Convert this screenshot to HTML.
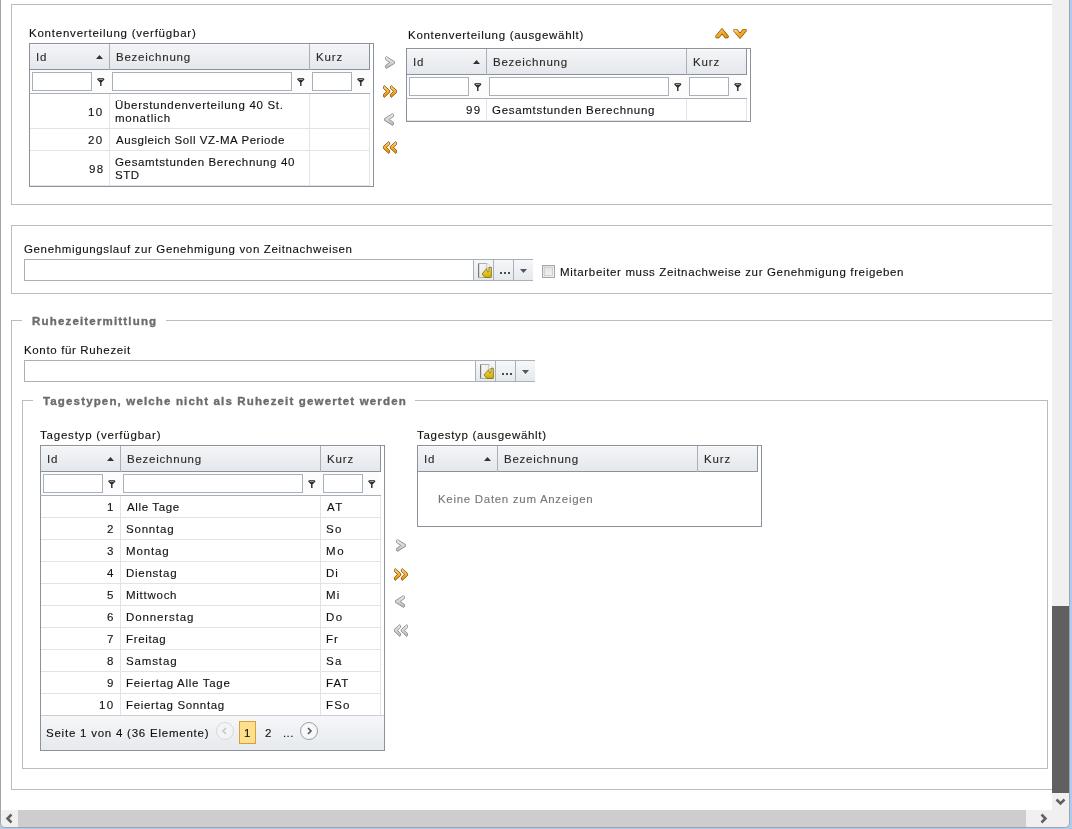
<!DOCTYPE html><html><head><meta charset="utf-8"><style>
html,body{margin:0;padding:0}body{width:1072px;height:829px;overflow:hidden;position:relative;background:#fff}
.a{position:absolute}
.t{position:absolute;font-family:"Liberation Sans", sans-serif;font-size:11.5px;line-height:13px;color:#111;-webkit-text-stroke-width:0.12px;white-space:nowrap;will-change:transform}
.lg{font-weight:bold;color:#6b6b6b;letter-spacing:0.8px}
</style></head><body>
<div class="a" style="left:11px;top:4px;width:1100px;height:201px;box-sizing:border-box;border:1px solid #b9bcc1"></div>
<div class="t" style="left:29.00px;top:27px;letter-spacing:0.778px;">Kontenverteilung (verfügbar)</div>
<div class="a" style="left:29px;top:43px;width:345px;height:144px;box-sizing:border-box;border:1px solid #8b929b;background:#fff"></div>
<div class="a" style="left:30px;top:44px;width:339px;height:25px;background:linear-gradient(#f4f5f7,#e4e8ec)"></div>
<div class="a" style="left:30px;top:44px;width:339px;height:1px;background:#fbfbfc"></div>
<div class="a" style="left:29px;top:69px;width:341px;height:1px;background:#8b929b"></div>
<div class="a" style="left:369px;top:43px;width:1px;height:27px;background:#8b929b"></div>
<div class="a" style="left:109px;top:44px;width:1px;height:26px;background:#a9b0b8"></div>
<div class="a" style="left:309px;top:44px;width:1px;height:26px;background:#a9b0b8"></div>
<div class="t" style="left:36.00px;top:51px;letter-spacing:0.838px;color:#2a2a2a">Id</div>
<svg class="a" style="left:96px;top:55px" width="7" height="4" viewBox="0 0 7 4"><path d="M0 4 L3.5 0 L7 4 Z" fill="#333"/></svg>
<div class="t" style="left:116.00px;top:51px;letter-spacing:0.766px;color:#2a2a2a">Bezeichnung</div>
<div class="t" style="left:316.00px;top:51px;letter-spacing:0.838px;color:#2a2a2a">Kurz</div>
<div class="a" style="left:30px;top:70px;width:339px;height:23px;background:#fcfcfd"></div>
<div class="a" style="left:32px;top:72px;width:60px;height:19px;box-sizing:border-box;border:1px solid #a9b0b9;background:#fff"></div>
<svg class="a" style="left:97px;top:78px" width="8" height="8" viewBox="0 0 8 8"><path d="M0.2 1.4 Q0.2 0.1 3.8 0.1 Q7.4 0.1 7.4 1.4 L4.5 4.4 V7.9 H3.1 V4.4 Z" fill="#2b2b2b"/><ellipse cx="3.8" cy="1.3" rx="2.3" ry="0.55" fill="#c8c8c8"/></svg>
<div class="a" style="left:112px;top:72px;width:180px;height:19px;box-sizing:border-box;border:1px solid #a9b0b9;background:#fff"></div>
<svg class="a" style="left:297px;top:78px" width="8" height="8" viewBox="0 0 8 8"><path d="M0.2 1.4 Q0.2 0.1 3.8 0.1 Q7.4 0.1 7.4 1.4 L4.5 4.4 V7.9 H3.1 V4.4 Z" fill="#2b2b2b"/><ellipse cx="3.8" cy="1.3" rx="2.3" ry="0.55" fill="#c8c8c8"/></svg>
<div class="a" style="left:312px;top:72px;width:40px;height:19px;box-sizing:border-box;border:1px solid #a9b0b9;background:#fff"></div>
<svg class="a" style="left:357px;top:78px" width="8" height="8" viewBox="0 0 8 8"><path d="M0.2 1.4 Q0.2 0.1 3.8 0.1 Q7.4 0.1 7.4 1.4 L4.5 4.4 V7.9 H3.1 V4.4 Z" fill="#2b2b2b"/><ellipse cx="3.8" cy="1.3" rx="2.3" ry="0.55" fill="#c8c8c8"/></svg>
<div class="a" style="left:29px;top:93px;width:341px;height:1px;background:#a8afb8"></div>
<div class="a" style="left:30px;top:128px;width:340px;height:1px;background:#e0e3e7"></div>
<div class="a" style="left:109px;top:94px;width:1px;height:35px;background:#e0e3e7"></div>
<div class="a" style="left:309px;top:94px;width:1px;height:35px;background:#e0e3e7"></div>
<div class="a" style="left:369px;top:94px;width:1px;height:35px;background:#e0e3e7"></div>
<div class="t" style="left:87.68px;top:106px;letter-spacing:1.316px;">10</div>
<div class="t" style="left:115.00px;top:99px;letter-spacing:0.704px;">Überstundenverteilung 40 St.</div>
<div class="t" style="left:115.00px;top:112px;letter-spacing:0.750px;">monatlich</div>
<div class="a" style="left:30px;top:150px;width:340px;height:1px;background:#e0e3e7"></div>
<div class="a" style="left:109px;top:129px;width:1px;height:22px;background:#e0e3e7"></div>
<div class="a" style="left:309px;top:129px;width:1px;height:22px;background:#e0e3e7"></div>
<div class="a" style="left:369px;top:129px;width:1px;height:22px;background:#e0e3e7"></div>
<div class="t" style="left:87.56px;top:134px;letter-spacing:1.436px;">20</div>
<div class="t" style="left:116.00px;top:134px;letter-spacing:0.556px;">Ausgleich Soll VZ-MA Periode</div>
<div class="a" style="left:30px;top:185px;width:340px;height:1px;background:#e0e3e7"></div>
<div class="a" style="left:109px;top:151px;width:1px;height:35px;background:#e0e3e7"></div>
<div class="a" style="left:309px;top:151px;width:1px;height:35px;background:#e0e3e7"></div>
<div class="a" style="left:369px;top:151px;width:1px;height:35px;background:#e0e3e7"></div>
<div class="t" style="left:88.68px;top:163px;letter-spacing:1.316px;">98</div>
<div class="t" style="left:115.00px;top:156px;letter-spacing:0.654px;">Gesamtstunden Berechnung 40</div>
<div class="t" style="left:115.00px;top:169px;letter-spacing:0.500px;">STD</div>
<svg class="a" style="left:385px;top:56px" width="10" height="13" viewBox="0 0 10 13"><defs><linearGradient id="g1" x1="0" y1="0" x2="0" y2="1"><stop offset="0" stop-color="#f2f2f2"/><stop offset="0.5" stop-color="#d4d4d4"/><stop offset="1" stop-color="#b8b8b8"/></linearGradient></defs><g transform=""><path d="M1.5 0.6 L9.6 5.7 L9.6 7.3 L1.5 12.4 L0.4 11.4 L0.4 9.6 L4.8 6.5 L0.4 3.4 L0.4 1.6 Z" fill="url(#g1)" stroke="#8a8a8a" stroke-width="0.9" stroke-linejoin="round"/></g></svg>
<svg class="a" style="left:383px;top:85px" width="14" height="13" viewBox="0 0 14 13"><defs><linearGradient id="g2" x1="0" y1="0" x2="0" y2="1"><stop offset="0" stop-color="#ffe6a8"/><stop offset="0.45" stop-color="#f7b23a"/><stop offset="1" stop-color="#ea9010"/></linearGradient></defs><g transform=""><path d="M1.2 0.6 L6.8 5.6 L6.8 7.2 L1.2 12.4 L0.4 11.5 L0.4 9.4 L3.6 6.4 L0.4 3.4 L0.4 1.4 Z" fill="url(#g2)" stroke="#8c5400" stroke-width="0.9" stroke-linejoin="round"/><path d="M8.2 0.6 L13.8 5.6 L13.8 7.2 L8.2 12.4 L7.4 11.5 L7.4 9.4 L10.6 6.4 L7.4 3.4 L7.4 1.4 Z" fill="url(#g2)" stroke="#8c5400" stroke-width="0.9" stroke-linejoin="round"/></g></svg>
<svg class="a" style="left:384px;top:113px" width="10" height="13" viewBox="0 0 10 13"><defs><linearGradient id="g3" x1="0" y1="0" x2="0" y2="1"><stop offset="0" stop-color="#f2f2f2"/><stop offset="0.5" stop-color="#d4d4d4"/><stop offset="1" stop-color="#b8b8b8"/></linearGradient></defs><g transform="translate(10,0) scale(-1,1)"><path d="M1.5 0.6 L9.6 5.7 L9.6 7.3 L1.5 12.4 L0.4 11.4 L0.4 9.6 L4.8 6.5 L0.4 3.4 L0.4 1.6 Z" fill="url(#g3)" stroke="#8a8a8a" stroke-width="0.9" stroke-linejoin="round"/></g></svg>
<svg class="a" style="left:383px;top:141px" width="14" height="13" viewBox="0 0 14 13"><defs><linearGradient id="g4" x1="0" y1="0" x2="0" y2="1"><stop offset="0" stop-color="#ffe6a8"/><stop offset="0.45" stop-color="#f7b23a"/><stop offset="1" stop-color="#ea9010"/></linearGradient></defs><g transform="translate(14,0) scale(-1,1)"><path d="M1.2 0.6 L6.8 5.6 L6.8 7.2 L1.2 12.4 L0.4 11.5 L0.4 9.4 L3.6 6.4 L0.4 3.4 L0.4 1.4 Z" fill="url(#g4)" stroke="#8c5400" stroke-width="0.9" stroke-linejoin="round"/><path d="M8.2 0.6 L13.8 5.6 L13.8 7.2 L8.2 12.4 L7.4 11.5 L7.4 9.4 L10.6 6.4 L7.4 3.4 L7.4 1.4 Z" fill="url(#g4)" stroke="#8c5400" stroke-width="0.9" stroke-linejoin="round"/></g></svg>
<div class="t" style="left:408.00px;top:29px;letter-spacing:0.714px;">Kontenverteilung (ausgewählt)</div>
<svg class="a" style="left:715px;top:28px" width="14" height="11" viewBox="0 0 14 11"><defs><linearGradient id="g5" x1="0" y1="0" x2="1" y2="1"><stop offset="0" stop-color="#fff0c8"/><stop offset="0.4" stop-color="#f6b030"/><stop offset="1" stop-color="#e48a08"/></linearGradient></defs><path d="M7 0.4 L13.7 8.4 L12.8 9.9 L10.1 9.9 L7 5.9 L3.9 9.9 L1.2 9.9 L0.3 8.4 Z" fill="url(#g5)" stroke="#8c5400" stroke-width="0.9" stroke-linejoin="round"/></svg>
<svg class="a" style="left:733px;top:29px" width="14" height="11" viewBox="0 0 14 11"><defs><linearGradient id="g6" x1="0" y1="0" x2="1" y2="1"><stop offset="0" stop-color="#fff0c8"/><stop offset="0.4" stop-color="#f6b030"/><stop offset="1" stop-color="#e48a08"/></linearGradient></defs><path d="M0.3 1.6 L1.2 0.1 L3.9 0.1 L7 4.1 L10.1 0.1 L12.8 0.1 L13.7 1.6 L7 9.6 Z" fill="url(#g6)" stroke="#8c5400" stroke-width="0.9" stroke-linejoin="round"/></svg>
<div class="a" style="left:406px;top:48px;width:345px;height:74px;box-sizing:border-box;border:1px solid #8b929b;background:#fff"></div>
<div class="a" style="left:407px;top:49px;width:339px;height:25px;background:linear-gradient(#f4f5f7,#e4e8ec)"></div>
<div class="a" style="left:407px;top:49px;width:339px;height:1px;background:#fbfbfc"></div>
<div class="a" style="left:406px;top:74px;width:341px;height:1px;background:#8b929b"></div>
<div class="a" style="left:746px;top:48px;width:1px;height:27px;background:#8b929b"></div>
<div class="a" style="left:486px;top:49px;width:1px;height:26px;background:#a9b0b8"></div>
<div class="a" style="left:686px;top:49px;width:1px;height:26px;background:#a9b0b8"></div>
<div class="t" style="left:413.00px;top:56px;letter-spacing:0.838px;color:#2a2a2a">Id</div>
<svg class="a" style="left:473px;top:60px" width="7" height="4" viewBox="0 0 7 4"><path d="M0 4 L3.5 0 L7 4 Z" fill="#333"/></svg>
<div class="t" style="left:493.00px;top:56px;letter-spacing:0.766px;color:#2a2a2a">Bezeichnung</div>
<div class="t" style="left:693.00px;top:56px;letter-spacing:0.838px;color:#2a2a2a">Kurz</div>
<div class="a" style="left:407px;top:75px;width:339px;height:23px;background:#fcfcfd"></div>
<div class="a" style="left:409px;top:77px;width:60px;height:19px;box-sizing:border-box;border:1px solid #a9b0b9;background:#fff"></div>
<svg class="a" style="left:474px;top:83px" width="8" height="8" viewBox="0 0 8 8"><path d="M0.2 1.4 Q0.2 0.1 3.8 0.1 Q7.4 0.1 7.4 1.4 L4.5 4.4 V7.9 H3.1 V4.4 Z" fill="#2b2b2b"/><ellipse cx="3.8" cy="1.3" rx="2.3" ry="0.55" fill="#c8c8c8"/></svg>
<div class="a" style="left:489px;top:77px;width:180px;height:19px;box-sizing:border-box;border:1px solid #a9b0b9;background:#fff"></div>
<svg class="a" style="left:674px;top:83px" width="8" height="8" viewBox="0 0 8 8"><path d="M0.2 1.4 Q0.2 0.1 3.8 0.1 Q7.4 0.1 7.4 1.4 L4.5 4.4 V7.9 H3.1 V4.4 Z" fill="#2b2b2b"/><ellipse cx="3.8" cy="1.3" rx="2.3" ry="0.55" fill="#c8c8c8"/></svg>
<div class="a" style="left:689px;top:77px;width:40px;height:19px;box-sizing:border-box;border:1px solid #a9b0b9;background:#fff"></div>
<svg class="a" style="left:734px;top:83px" width="8" height="8" viewBox="0 0 8 8"><path d="M0.2 1.4 Q0.2 0.1 3.8 0.1 Q7.4 0.1 7.4 1.4 L4.5 4.4 V7.9 H3.1 V4.4 Z" fill="#2b2b2b"/><ellipse cx="3.8" cy="1.3" rx="2.3" ry="0.55" fill="#c8c8c8"/></svg>
<div class="a" style="left:406px;top:98px;width:341px;height:1px;background:#a8afb8"></div>
<div class="a" style="left:407px;top:120px;width:340px;height:1px;background:#e0e3e7"></div>
<div class="a" style="left:486px;top:99px;width:1px;height:22px;background:#e0e3e7"></div>
<div class="a" style="left:686px;top:99px;width:1px;height:22px;background:#e0e3e7"></div>
<div class="a" style="left:746px;top:99px;width:1px;height:22px;background:#e0e3e7"></div>
<div class="t" style="left:465.68px;top:104px;letter-spacing:1.316px;">99</div>
<div class="t" style="left:492.00px;top:104px;letter-spacing:0.696px;">Gesamtstunden Berechnung</div>
<div class="a" style="left:11px;top:225px;width:1100px;height:69px;box-sizing:border-box;border:1px solid #b9bcc1"></div>
<div class="t" style="left:24.00px;top:243px;letter-spacing:0.640px;">Genehmigungslauf zur Genehmigung von Zeitnachweisen</div>
<div class="a" style="left:24px;top:259px;width:509px;height:22px;box-sizing:border-box;border:1px solid #a9b0b9;background:#fff"></div>
<div class="a" style="left:473px;top:260px;width:20px;height:20px;background:linear-gradient(#f5f7f9,#e6e9ec)"></div>
<div class="a" style="left:473px;top:259px;width:1px;height:22px;background:#a9b0b9"></div>
<div class="a" style="left:493px;top:260px;width:20px;height:20px;background:linear-gradient(#f5f7f9,#e6e9ec)"></div>
<div class="a" style="left:493px;top:259px;width:1px;height:22px;background:#a9b0b9"></div>
<div class="a" style="left:513px;top:260px;width:20px;height:20px;background:linear-gradient(#f5f7f9,#e6e9ec)"></div>
<div class="a" style="left:513px;top:259px;width:1px;height:22px;background:#a9b0b9"></div>
<svg class="a" style="left:478px;top:263px" width="14" height="15" viewBox="0 0 14 15"><defs><linearGradient id="pg259" x1="0" y1="0" x2="1" y2="1"><stop offset="0" stop-color="#fbfbfa"/><stop offset="1" stop-color="#dcdcd8"/></linearGradient><linearGradient id="yg259" x1="0" y1="0" x2="0" y2="1"><stop offset="0" stop-color="#f7e06a"/><stop offset="0.6" stop-color="#e2c222"/><stop offset="1" stop-color="#c9a600"/></linearGradient></defs><path d="M0.5 0.5 H8.8 L13 4.7 V14.5 H0.5 Z" fill="url(#pg259)" stroke="#a8a8a2" stroke-width="0.9"/><path d="M0.6 0.8 V14.2" stroke="#777" stroke-width="1.2"/><path d="M8.8 0.6 V4.7 H13" fill="#fff" stroke="#b5b5b0" stroke-width="0.8"/><path d="M8.6 5.6 L4 11 L7 14.6 L12.6 14.6 Q13.3 14.6 13.3 13.8 L13.3 4.3 L11 4.3 L11 7.6 Q11 9.2 9.5 9.2 Z" fill="url(#yg259)" stroke="#7d6600" stroke-width="0.75" stroke-linejoin="round"/></svg>
<div class="a" style="left:500px;top:272px;width:2px;height:2px;background:#454c55"></div>
<div class="a" style="left:504px;top:272px;width:2px;height:2px;background:#454c55"></div>
<div class="a" style="left:508px;top:272px;width:2px;height:2px;background:#454c55"></div>
<svg class="a" style="left:520px;top:269px" width="7" height="4" viewBox="0 0 7 4"><path d="M0 0 H7 L3.5 4 Z" fill="#4f5660"/></svg>
<div class="a" style="left:542px;top:265px;width:13px;height:13px;box-sizing:border-box;border:1px solid #9ea7b2;background:linear-gradient(135deg,#dcdcdc,#f4f4f4)"></div>
<div class="a" style="left:544px;top:267px;width:9px;height:9px;box-sizing:border-box;border:1px solid #d0d0d0;background:linear-gradient(#e4e4e4,#f0f0f0)"></div>
<div class="t" style="left:560.00px;top:266px;letter-spacing:0.655px;">Mitarbeiter muss Zeitnachweise zur Genehmigung freigeben</div>
<div class="a" style="left:11px;top:320px;width:1px;height:470px;background:#b9bcc1"></div>
<div class="a" style="left:11px;top:789px;width:1090px;height:1px;background:#b9bcc1"></div>
<div class="a" style="left:11px;top:320px;width:11px;height:1px;background:#b9bcc1"></div>
<div class="a" style="left:166px;top:320px;width:935px;height:1px;background:#b9bcc1"></div>
<div class="t" style="left:32.00px;top:315px;letter-spacing:1.176px;font-weight:700;color:#6b6b6b;-webkit-text-stroke-width:0.35px">Ruhezeitermittlung</div>
<div class="t" style="left:24.00px;top:344px;letter-spacing:0.647px;">Konto für Ruhezeit</div>
<div class="a" style="left:24px;top:360px;width:511px;height:22px;box-sizing:border-box;border:1px solid #a9b0b9;background:#fff"></div>
<div class="a" style="left:475px;top:361px;width:20px;height:20px;background:linear-gradient(#f5f7f9,#e6e9ec)"></div>
<div class="a" style="left:475px;top:360px;width:1px;height:22px;background:#a9b0b9"></div>
<div class="a" style="left:495px;top:361px;width:20px;height:20px;background:linear-gradient(#f5f7f9,#e6e9ec)"></div>
<div class="a" style="left:495px;top:360px;width:1px;height:22px;background:#a9b0b9"></div>
<div class="a" style="left:515px;top:361px;width:20px;height:20px;background:linear-gradient(#f5f7f9,#e6e9ec)"></div>
<div class="a" style="left:515px;top:360px;width:1px;height:22px;background:#a9b0b9"></div>
<svg class="a" style="left:480px;top:364px" width="14" height="15" viewBox="0 0 14 15"><defs><linearGradient id="pg360" x1="0" y1="0" x2="1" y2="1"><stop offset="0" stop-color="#fbfbfa"/><stop offset="1" stop-color="#dcdcd8"/></linearGradient><linearGradient id="yg360" x1="0" y1="0" x2="0" y2="1"><stop offset="0" stop-color="#f7e06a"/><stop offset="0.6" stop-color="#e2c222"/><stop offset="1" stop-color="#c9a600"/></linearGradient></defs><path d="M0.5 0.5 H8.8 L13 4.7 V14.5 H0.5 Z" fill="url(#pg360)" stroke="#a8a8a2" stroke-width="0.9"/><path d="M0.6 0.8 V14.2" stroke="#777" stroke-width="1.2"/><path d="M8.8 0.6 V4.7 H13" fill="#fff" stroke="#b5b5b0" stroke-width="0.8"/><path d="M8.6 5.6 L4 11 L7 14.6 L12.6 14.6 Q13.3 14.6 13.3 13.8 L13.3 4.3 L11 4.3 L11 7.6 Q11 9.2 9.5 9.2 Z" fill="url(#yg360)" stroke="#7d6600" stroke-width="0.75" stroke-linejoin="round"/></svg>
<div class="a" style="left:502px;top:373px;width:2px;height:2px;background:#454c55"></div>
<div class="a" style="left:506px;top:373px;width:2px;height:2px;background:#454c55"></div>
<div class="a" style="left:510px;top:373px;width:2px;height:2px;background:#454c55"></div>
<svg class="a" style="left:522px;top:370px" width="7" height="4" viewBox="0 0 7 4"><path d="M0 0 H7 L3.5 4 Z" fill="#4f5660"/></svg>
<div class="a" style="left:22px;top:400px;width:1px;height:369px;background:#b9bcc1"></div>
<div class="a" style="left:22px;top:768px;width:1026px;height:1px;background:#b9bcc1"></div>
<div class="a" style="left:1047px;top:400px;width:1px;height:369px;background:#b9bcc1"></div>
<div class="a" style="left:22px;top:400px;width:11px;height:1px;background:#b9bcc1"></div>
<div class="a" style="left:415px;top:400px;width:633px;height:1px;background:#b9bcc1"></div>
<div class="t" style="left:43.00px;top:395px;letter-spacing:1.154px;font-weight:700;color:#6b6b6b;-webkit-text-stroke-width:0.35px">Tagestypen, welche nicht als Ruhezeit gewertet werden</div>
<div class="t" style="left:40.00px;top:429px;letter-spacing:0.789px;">Tagestyp (verfügbar)</div>
<div class="a" style="left:40px;top:445px;width:345px;height:306px;box-sizing:border-box;border:1px solid #8b929b;background:#fff"></div>
<div class="a" style="left:41px;top:446px;width:339px;height:25px;background:linear-gradient(#f4f5f7,#e4e8ec)"></div>
<div class="a" style="left:41px;top:446px;width:339px;height:1px;background:#fbfbfc"></div>
<div class="a" style="left:40px;top:471px;width:341px;height:1px;background:#8b929b"></div>
<div class="a" style="left:380px;top:445px;width:1px;height:27px;background:#8b929b"></div>
<div class="a" style="left:120px;top:446px;width:1px;height:26px;background:#a9b0b8"></div>
<div class="a" style="left:320px;top:446px;width:1px;height:26px;background:#a9b0b8"></div>
<div class="t" style="left:47.00px;top:453px;letter-spacing:0.838px;color:#2a2a2a">Id</div>
<svg class="a" style="left:107px;top:457px" width="7" height="4" viewBox="0 0 7 4"><path d="M0 4 L3.5 0 L7 4 Z" fill="#333"/></svg>
<div class="t" style="left:127.00px;top:453px;letter-spacing:0.766px;color:#2a2a2a">Bezeichnung</div>
<div class="t" style="left:327.00px;top:453px;letter-spacing:0.838px;color:#2a2a2a">Kurz</div>
<div class="a" style="left:41px;top:472px;width:339px;height:23px;background:#fcfcfd"></div>
<div class="a" style="left:43px;top:474px;width:60px;height:19px;box-sizing:border-box;border:1px solid #a9b0b9;background:#fff"></div>
<svg class="a" style="left:108px;top:480px" width="8" height="8" viewBox="0 0 8 8"><path d="M0.2 1.4 Q0.2 0.1 3.8 0.1 Q7.4 0.1 7.4 1.4 L4.5 4.4 V7.9 H3.1 V4.4 Z" fill="#2b2b2b"/><ellipse cx="3.8" cy="1.3" rx="2.3" ry="0.55" fill="#c8c8c8"/></svg>
<div class="a" style="left:123px;top:474px;width:180px;height:19px;box-sizing:border-box;border:1px solid #a9b0b9;background:#fff"></div>
<svg class="a" style="left:308px;top:480px" width="8" height="8" viewBox="0 0 8 8"><path d="M0.2 1.4 Q0.2 0.1 3.8 0.1 Q7.4 0.1 7.4 1.4 L4.5 4.4 V7.9 H3.1 V4.4 Z" fill="#2b2b2b"/><ellipse cx="3.8" cy="1.3" rx="2.3" ry="0.55" fill="#c8c8c8"/></svg>
<div class="a" style="left:323px;top:474px;width:40px;height:19px;box-sizing:border-box;border:1px solid #a9b0b9;background:#fff"></div>
<svg class="a" style="left:368px;top:480px" width="8" height="8" viewBox="0 0 8 8"><path d="M0.2 1.4 Q0.2 0.1 3.8 0.1 Q7.4 0.1 7.4 1.4 L4.5 4.4 V7.9 H3.1 V4.4 Z" fill="#2b2b2b"/><ellipse cx="3.8" cy="1.3" rx="2.3" ry="0.55" fill="#c8c8c8"/></svg>
<div class="a" style="left:40px;top:495px;width:341px;height:1px;background:#a8afb8"></div>
<div class="a" style="left:41px;top:517px;width:340px;height:1px;background:#e0e3e7"></div>
<div class="a" style="left:120px;top:496px;width:1px;height:22px;background:#e0e3e7"></div>
<div class="a" style="left:320px;top:496px;width:1px;height:22px;background:#e0e3e7"></div>
<div class="a" style="left:380px;top:496px;width:1px;height:22px;background:#e0e3e7"></div>
<div class="t" style="left:107.00px;top:501px;letter-spacing:0.000px;">1</div>
<div class="t" style="left:127.00px;top:501px;letter-spacing:0.625px;">Alle Tage</div>
<div class="t" style="left:327.00px;top:501px;letter-spacing:1.555px;">AT</div>
<div class="a" style="left:41px;top:539px;width:340px;height:1px;background:#e0e3e7"></div>
<div class="a" style="left:120px;top:518px;width:1px;height:22px;background:#e0e3e7"></div>
<div class="a" style="left:320px;top:518px;width:1px;height:22px;background:#e0e3e7"></div>
<div class="a" style="left:380px;top:518px;width:1px;height:22px;background:#e0e3e7"></div>
<div class="t" style="left:107.00px;top:523px;letter-spacing:0.000px;">2</div>
<div class="t" style="left:126.00px;top:523px;letter-spacing:0.798px;">Sonntag</div>
<div class="t" style="left:326.00px;top:523px;letter-spacing:1.436px;">So</div>
<div class="a" style="left:41px;top:561px;width:340px;height:1px;background:#e0e3e7"></div>
<div class="a" style="left:120px;top:540px;width:1px;height:22px;background:#e0e3e7"></div>
<div class="a" style="left:320px;top:540px;width:1px;height:22px;background:#e0e3e7"></div>
<div class="a" style="left:380px;top:540px;width:1px;height:22px;background:#e0e3e7"></div>
<div class="t" style="left:107.00px;top:545px;letter-spacing:0.000px;">3</div>
<div class="t" style="left:126.00px;top:545px;letter-spacing:0.861px;">Montag</div>
<div class="t" style="left:326.00px;top:545px;letter-spacing:1.555px;">Mo</div>
<div class="a" style="left:41px;top:583px;width:340px;height:1px;background:#e0e3e7"></div>
<div class="a" style="left:120px;top:562px;width:1px;height:22px;background:#e0e3e7"></div>
<div class="a" style="left:320px;top:562px;width:1px;height:22px;background:#e0e3e7"></div>
<div class="a" style="left:380px;top:562px;width:1px;height:22px;background:#e0e3e7"></div>
<div class="t" style="left:107.00px;top:567px;letter-spacing:0.000px;">4</div>
<div class="t" style="left:126.00px;top:567px;letter-spacing:0.735px;">Dienstag</div>
<div class="t" style="left:326.00px;top:567px;letter-spacing:0.957px;">Di</div>
<div class="a" style="left:41px;top:605px;width:340px;height:1px;background:#e0e3e7"></div>
<div class="a" style="left:120px;top:584px;width:1px;height:22px;background:#e0e3e7"></div>
<div class="a" style="left:320px;top:584px;width:1px;height:22px;background:#e0e3e7"></div>
<div class="a" style="left:380px;top:584px;width:1px;height:22px;background:#e0e3e7"></div>
<div class="t" style="left:107.00px;top:589px;letter-spacing:0.000px;">5</div>
<div class="t" style="left:126.00px;top:589px;letter-spacing:0.735px;">Mittwoch</div>
<div class="t" style="left:326.00px;top:589px;letter-spacing:1.077px;">Mi</div>
<div class="a" style="left:41px;top:627px;width:340px;height:1px;background:#e0e3e7"></div>
<div class="a" style="left:120px;top:606px;width:1px;height:22px;background:#e0e3e7"></div>
<div class="a" style="left:320px;top:606px;width:1px;height:22px;background:#e0e3e7"></div>
<div class="a" style="left:380px;top:606px;width:1px;height:22px;background:#e0e3e7"></div>
<div class="t" style="left:107.00px;top:611px;letter-spacing:0.000px;">6</div>
<div class="t" style="left:126.00px;top:611px;letter-spacing:0.889px;">Donnerstag</div>
<div class="t" style="left:326.00px;top:611px;letter-spacing:1.436px;">Do</div>
<div class="a" style="left:41px;top:649px;width:340px;height:1px;background:#e0e3e7"></div>
<div class="a" style="left:120px;top:628px;width:1px;height:22px;background:#e0e3e7"></div>
<div class="a" style="left:320px;top:628px;width:1px;height:22px;background:#e0e3e7"></div>
<div class="a" style="left:380px;top:628px;width:1px;height:22px;background:#e0e3e7"></div>
<div class="t" style="left:107.00px;top:633px;letter-spacing:0.000px;">7</div>
<div class="t" style="left:126.00px;top:633px;letter-spacing:0.658px;">Freitag</div>
<div class="t" style="left:326.00px;top:633px;letter-spacing:1.077px;">Fr</div>
<div class="a" style="left:41px;top:671px;width:340px;height:1px;background:#e0e3e7"></div>
<div class="a" style="left:120px;top:650px;width:1px;height:22px;background:#e0e3e7"></div>
<div class="a" style="left:320px;top:650px;width:1px;height:22px;background:#e0e3e7"></div>
<div class="a" style="left:380px;top:650px;width:1px;height:22px;background:#e0e3e7"></div>
<div class="t" style="left:107.00px;top:655px;letter-spacing:0.000px;">8</div>
<div class="t" style="left:126.00px;top:655px;letter-spacing:0.857px;">Samstag</div>
<div class="t" style="left:326.00px;top:655px;letter-spacing:1.436px;">Sa</div>
<div class="a" style="left:41px;top:693px;width:340px;height:1px;background:#e0e3e7"></div>
<div class="a" style="left:120px;top:672px;width:1px;height:22px;background:#e0e3e7"></div>
<div class="a" style="left:320px;top:672px;width:1px;height:22px;background:#e0e3e7"></div>
<div class="a" style="left:380px;top:672px;width:1px;height:22px;background:#e0e3e7"></div>
<div class="t" style="left:107.00px;top:677px;letter-spacing:0.000px;">9</div>
<div class="t" style="left:126.00px;top:677px;letter-spacing:0.706px;">Feiertag Alle Tage</div>
<div class="t" style="left:326.00px;top:677px;letter-spacing:1.077px;">FAT</div>
<div class="a" style="left:41px;top:715px;width:340px;height:1px;background:#e0e3e7"></div>
<div class="a" style="left:120px;top:694px;width:1px;height:22px;background:#e0e3e7"></div>
<div class="a" style="left:320px;top:694px;width:1px;height:22px;background:#e0e3e7"></div>
<div class="a" style="left:380px;top:694px;width:1px;height:22px;background:#e0e3e7"></div>
<div class="t" style="left:98.68px;top:699px;letter-spacing:1.316px;">10</div>
<div class="t" style="left:126.00px;top:699px;letter-spacing:0.667px;">Feiertag Sonntag</div>
<div class="t" style="left:326.00px;top:699px;letter-spacing:1.137px;">FSo</div>
<div class="a" style="left:41px;top:716px;width:343px;height:34px;background:linear-gradient(#f6f7f9,#e6e9ed)"></div>
<div class="a" style="left:41px;top:715px;width:343px;height:1px;background:#c9ced4"></div>
<div class="t" style="left:46.00px;top:727px;letter-spacing:0.769px;">Seite 1 von 4 (36 Elemente)</div>
<svg class="a" style="left:215px;top:721px" width="20" height="20" viewBox="0 0 20 20"><circle cx="10" cy="10" r="8.5" fill="#f3f4f6" stroke="#d5d8dc"/><path d="M11 7 L8 10 L11 13" fill="none" stroke="#c4c8cc" stroke-width="1.6"/></svg>
<div class="a" style="left:239px;top:721px;width:17px;height:23px;box-sizing:border-box;border:1px solid #d6a13c;background:#fde089"></div>
<div class="t" style="left:244.00px;top:727px;letter-spacing:0.000px;">1</div>
<div class="t" style="left:265.00px;top:727px;letter-spacing:0.000px;">2</div>
<div class="t" style="left:283.00px;top:727px;letter-spacing:0.419px;">...</div>
<svg class="a" style="left:299px;top:721px" width="20" height="20" viewBox="0 0 20 20"><circle cx="10" cy="10" r="8.5" fill="#f7f8f9" stroke="#9aa0a8"/><path d="M9 7 L12 10 L9 13" fill="none" stroke="#555" stroke-width="1.6"/></svg>
<svg class="a" style="left:396px;top:539px" width="10" height="13" viewBox="0 0 10 13"><defs><linearGradient id="g7" x1="0" y1="0" x2="0" y2="1"><stop offset="0" stop-color="#f2f2f2"/><stop offset="0.5" stop-color="#d4d4d4"/><stop offset="1" stop-color="#b8b8b8"/></linearGradient></defs><g transform=""><path d="M1.5 0.6 L9.6 5.7 L9.6 7.3 L1.5 12.4 L0.4 11.4 L0.4 9.6 L4.8 6.5 L0.4 3.4 L0.4 1.6 Z" fill="url(#g7)" stroke="#8a8a8a" stroke-width="0.9" stroke-linejoin="round"/></g></svg>
<svg class="a" style="left:394px;top:568px" width="14" height="13" viewBox="0 0 14 13"><defs><linearGradient id="g8" x1="0" y1="0" x2="0" y2="1"><stop offset="0" stop-color="#ffe6a8"/><stop offset="0.45" stop-color="#f7b23a"/><stop offset="1" stop-color="#ea9010"/></linearGradient></defs><g transform=""><path d="M1.2 0.6 L6.8 5.6 L6.8 7.2 L1.2 12.4 L0.4 11.5 L0.4 9.4 L3.6 6.4 L0.4 3.4 L0.4 1.4 Z" fill="url(#g8)" stroke="#8c5400" stroke-width="0.9" stroke-linejoin="round"/><path d="M8.2 0.6 L13.8 5.6 L13.8 7.2 L8.2 12.4 L7.4 11.5 L7.4 9.4 L10.6 6.4 L7.4 3.4 L7.4 1.4 Z" fill="url(#g8)" stroke="#8c5400" stroke-width="0.9" stroke-linejoin="round"/></g></svg>
<svg class="a" style="left:395px;top:595px" width="10" height="13" viewBox="0 0 10 13"><defs><linearGradient id="g9" x1="0" y1="0" x2="0" y2="1"><stop offset="0" stop-color="#f2f2f2"/><stop offset="0.5" stop-color="#d4d4d4"/><stop offset="1" stop-color="#b8b8b8"/></linearGradient></defs><g transform="translate(10,0) scale(-1,1)"><path d="M1.5 0.6 L9.6 5.7 L9.6 7.3 L1.5 12.4 L0.4 11.4 L0.4 9.6 L4.8 6.5 L0.4 3.4 L0.4 1.6 Z" fill="url(#g9)" stroke="#8a8a8a" stroke-width="0.9" stroke-linejoin="round"/></g></svg>
<svg class="a" style="left:394px;top:624px" width="14" height="13" viewBox="0 0 14 13"><defs><linearGradient id="g10" x1="0" y1="0" x2="0" y2="1"><stop offset="0" stop-color="#f2f2f2"/><stop offset="0.5" stop-color="#d4d4d4"/><stop offset="1" stop-color="#b8b8b8"/></linearGradient></defs><g transform="translate(14,0) scale(-1,1)"><path d="M1.2 0.6 L6.8 5.6 L6.8 7.2 L1.2 12.4 L0.4 11.5 L0.4 9.4 L3.6 6.4 L0.4 3.4 L0.4 1.4 Z" fill="url(#g10)" stroke="#8a8a8a" stroke-width="0.9" stroke-linejoin="round"/><path d="M8.2 0.6 L13.8 5.6 L13.8 7.2 L8.2 12.4 L7.4 11.5 L7.4 9.4 L10.6 6.4 L7.4 3.4 L7.4 1.4 Z" fill="url(#g10)" stroke="#8a8a8a" stroke-width="0.9" stroke-linejoin="round"/></g></svg>
<div class="t" style="left:417.00px;top:429px;letter-spacing:0.700px;">Tagestyp (ausgewählt)</div>
<div class="a" style="left:417px;top:445px;width:345px;height:82px;box-sizing:border-box;border:1px solid #8b929b;background:#fff"></div>
<div class="a" style="left:418px;top:446px;width:339px;height:25px;background:linear-gradient(#f4f5f7,#e4e8ec)"></div>
<div class="a" style="left:418px;top:446px;width:339px;height:1px;background:#fbfbfc"></div>
<div class="a" style="left:417px;top:471px;width:341px;height:1px;background:#8b929b"></div>
<div class="a" style="left:757px;top:445px;width:1px;height:27px;background:#8b929b"></div>
<div class="a" style="left:497px;top:446px;width:1px;height:26px;background:#a9b0b8"></div>
<div class="a" style="left:697px;top:446px;width:1px;height:26px;background:#a9b0b8"></div>
<div class="t" style="left:424.00px;top:453px;letter-spacing:0.838px;color:#2a2a2a">Id</div>
<svg class="a" style="left:484px;top:457px" width="7" height="4" viewBox="0 0 7 4"><path d="M0 4 L3.5 0 L7 4 Z" fill="#333"/></svg>
<div class="t" style="left:504.00px;top:453px;letter-spacing:0.766px;color:#2a2a2a">Bezeichnung</div>
<div class="t" style="left:704.00px;top:453px;letter-spacing:0.838px;color:#2a2a2a">Kurz</div>
<div class="t" style="left:438.00px;top:493px;letter-spacing:0.696px;color:#777">Keine Daten zum Anzeigen</div>
<div class="a" style="left:1052px;top:0px;width:17px;height:810px;background:#f0f0f0"></div>
<div class="a" style="left:1052px;top:606px;width:17px;height:187px;background:#606060"></div>
<svg class="a" style="left:1052px;top:793px" width="17" height="17" viewBox="0 0 17 17"><path d="M4.5 6.5 L8.5 10.5 L12.5 6.5" fill="none" stroke="#606060" stroke-width="2.5"/></svg>
<div class="a" style="left:1px;top:810px;width:1068px;height:17px;background:#f0f0f0"></div>
<div class="a" style="left:18px;top:810px;width:1008px;height:17px;background:#cdcdcd"></div>
<svg class="a" style="left:1px;top:810px" width="17" height="17" viewBox="0 0 17 17"><path d="M10.5 4.5 L6.5 8.5 L10.5 12.5" fill="none" stroke="#606060" stroke-width="2.5"/></svg>
<svg class="a" style="left:1035px;top:810px" width="17" height="17" viewBox="0 0 17 17"><path d="M6.5 4.5 L10.5 8.5 L6.5 12.5" fill="none" stroke="#606060" stroke-width="2.5"/></svg>
<div class="a" style="left:0px;top:0px;width:1px;height:828px;background:#a4a4a4"></div>
<div class="a" style="left:1069px;top:0px;width:1px;height:828px;background:#a4a4a4"></div>
<div class="a" style="left:0px;top:827px;width:1070px;height:1px;background:#a4a4a4"></div>
<div class="a" style="left:1070px;top:0px;width:2px;height:829px;background:#abcdf5"></div>
<div class="a" style="left:0px;top:828px;width:1072px;height:1px;background:#abcdf5"></div>
<svg class="a" style="left:0px;top:821px" width="7" height="8" viewBox="0 0 7 8"><rect width="7" height="8" fill="#abcdf5"/><path d="M0.5 0 V2.5 A4 4 0 0 0 4.5 6.5 H7 V0 Z" fill="#f0f0f0"/><path d="M0.5 0 V2.5 A4 4 0 0 0 4.5 6.5 H7" fill="none" stroke="#a4a4a4"/></svg>
<svg class="a" style="left:1065px;top:821px" width="7" height="8" viewBox="0 0 7 8"><rect width="7" height="8" fill="#abcdf5"/><path d="M0 0 H4.5 V2.5 A4 4 0 0 1 0.5 6.5 H0 Z" fill="#f0f0f0"/><path d="M4.5 0 V2.5 A4 4 0 0 1 0.5 6.5 H0" fill="none" stroke="#a4a4a4"/></svg>
</body></html>
